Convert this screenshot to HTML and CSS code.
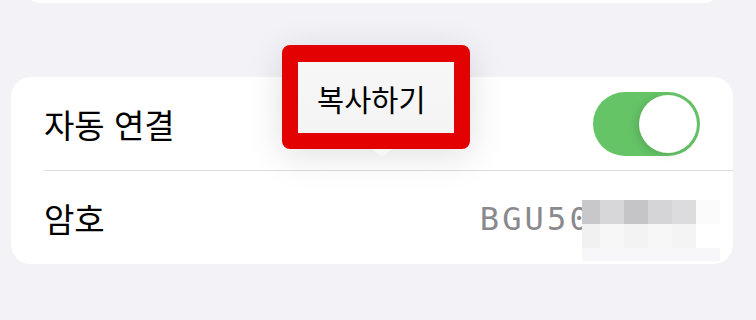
FILE: index.html
```html
<!DOCTYPE html>
<html lang="ko">
<head>
<meta charset="utf-8">
<link rel="stylesheet" href="styles.css">
</head>
<body>
<div class="page">
  <div class="top-card"></div>
  <div class="card">
    <div class="row">
      <span class="label">자동 연결</span>
      <div class="toggle"><div class="knob"></div></div>
    </div>
    <div class="sep"></div>
    <div class="row">
      <span class="label">암호</span>
      <span class="value">BGU50</span>
    </div>
    <div class="mosaic">
      <i style="background:#c8c8ca"></i><i style="background:#d7d7d9"></i><i style="background:#c5c5c7"></i><i style="background:#d5d5d7"></i><i style="background:#dcdcde"></i><i style="background:#fbfbfc"></i>
      <i style="background:#f1f1f2"></i><i style="background:#f7f7f8"></i><i style="background:#f3f3f4"></i><i style="background:#f7f7f8"></i><i style="background:#f4f4f5"></i><i style="background:#ffffff"></i>
      <i class="wide" style="background:#f7f7f9"></i>
    </div>
  </div>
  <div class="popup">
    <div class="popup-inner">복사하기</div>
    <div class="arrow"></div>
  </div>
</div>
</body>
</html>
```

FILE: styles.css
```css
html, body {
  margin: 0;
  padding: 0;
}
body {
  background: #f2f2f7;
  width: 756px;
  height: 320px;
  overflow: hidden;
  font-family: "Noto Sans CJK KR", "Noto Sans", sans-serif;
}
.page {
  position: relative;
  display: flow-root;
  width: 756px;
  height: 320px;
}
.top-card {
  margin: -37px 0 0 22px;
  width: 701px;
  height: 40px;
  background: #ffffff;
  border-radius: 20px;
}
.card {
  position: relative;
  margin: 74px 0 0 11px;
  width: 722px;
  height: 187px;
  background: #ffffff;
  border-radius: 20px;
  display: flex;
  flex-direction: column;
}
.row {
  display: flex;
  align-items: center;
  justify-content: space-between;
  padding: 0 33px;
  height: 93px;
}
.label {
  font-size: 33px;
  color: #000;
  margin-top: 1px;
}
.sep {
  height: 1px;
  background: #dcdce0;
  margin-left: 33px;
}
.toggle {
  width: 107px;
  height: 64px;
  border-radius: 32px;
  background: #65c466;
  display: flex;
  align-items: center;
  justify-content: flex-end;
  padding-right: 3px;
  box-sizing: border-box;
}
.knob {
  width: 58px;
  height: 58px;
  border-radius: 50%;
  background: #fff;
  box-shadow: -3px 2px 8px rgba(0,0,0,0.12);
}
.value {
  font-family: "DejaVu Sans Mono", monospace;
  font-size: 32px;
  letter-spacing: 3.2px;
  color: #8a8a8e;
  margin-right: 108px;
  margin-top: 2px;
}
.mosaic {
  position: absolute;
  left: 571px;
  top: 123px;
  display: grid;
  grid-template-columns: 18px 24px 24px 24px 24px 24px;
  grid-template-rows: 24px 24px 13px;
}
.mosaic i {
  display: block;
}
.mosaic i.wide {
  grid-column: 1 / 7;
}
.popup {
  position: absolute;
  left: 282px;
  top: 45px;
  width: 188px;
  height: 104px;
  box-sizing: border-box;
  border: 16px solid #e30202;
  border-top-width: 17px;
  border-radius: 8px;
  background: #f6f6f6;
  box-shadow: 0 6px 36px rgba(0, 0, 0, 0.13);
}
.popup-inner {
  height: 100%;
  display: flex;
  align-items: center;
  padding-left: 19px;
  font-size: 29.5px;
  color: #000;
  background: linear-gradient(#f7f7f7, #f4f4f4);
}
.arrow {
  position: absolute;
  left: 74px;
  top: 87px;
  width: 0;
  height: 0;
  border-left: 10px solid transparent;
  border-right: 10px solid transparent;
  border-top: 9px solid #f6f6f6;
}
```
